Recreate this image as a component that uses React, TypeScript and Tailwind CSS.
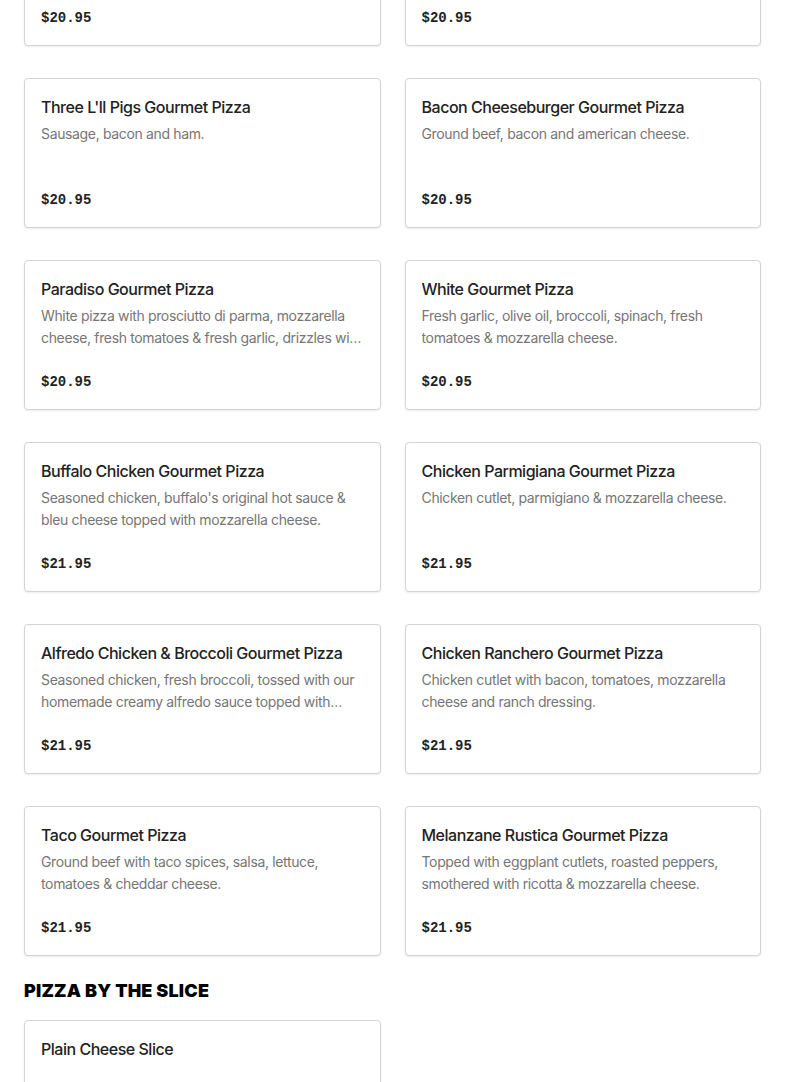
const gourmet = [
  { name: "Supreme Gourmet Pizza", desc: "Sausage, pepperoni, peppers, onions and mushrooms.", price: "$20.95" },
  { name: "Meat Lovers Gourmet Pizza", desc: "Sausage, pepperoni, meatballs and bacon.", price: "$20.95" },
  { name: "Three L'll Pigs Gourmet Pizza", desc: "Sausage, bacon and ham.", price: "$20.95" },
  { name: "Bacon Cheeseburger Gourmet Pizza", desc: "Ground beef, bacon and american cheese.", price: "$20.95" },
  {
    name: "Paradiso Gourmet Pizza",
    desc: "White pizza with prosciutto di parma, mozzarella cheese, fresh tomatoes & fresh garlic, drizzles with balsamic glaze.",
    price: "$20.95"
  },
  { name: "White Gourmet Pizza", desc: "Fresh garlic, olive oil, broccoli, spinach, fresh tomatoes & mozzarella cheese.", price: "$20.95" },
  {
    name: "Buffalo Chicken Gourmet Pizza",
    desc: "Seasoned chicken, buffalo's original hot sauce & bleu cheese topped with mozzarella cheese.",
    price: "$21.95"
  },
  { name: "Chicken Parmigiana Gourmet Pizza", desc: "Chicken cutlet, parmigiano & mozzarella cheese.", price: "$21.95" },
  {
    name: "Alfredo Chicken & Broccoli Gourmet Pizza",
    desc: "Seasoned chicken, fresh broccoli, tossed with our homemade creamy alfredo sauce topped with mozzarella cheese.",
    price: "$21.95"
  },
  {
    name: "Chicken Ranchero Gourmet Pizza",
    desc: "Chicken cutlet with bacon, tomatoes, mozzarella cheese and ranch dressing.",
    price: "$21.95"
  },
  { name: "Taco Gourmet Pizza", desc: "Ground beef with taco spices, salsa, lettuce, tomatoes & cheddar cheese.", price: "$21.95" },
  {
    name: "Melanzane Rustica Gourmet Pizza",
    desc: "Topped with eggplant cutlets, roasted peppers, smothered with ricotta & mozzarella cheese.",
    price: "$21.95"
  }
];

const slices = [
  { name: "Plain Cheese Slice", desc: "", price: "$3.25" },
  { name: "Sicilian Slice", desc: "", price: "$3.75" }
];

function MenuCard({ name, desc, price }: { name: string; desc: string; price: string }) {
  return (
    <div className="flex h-[150px] flex-col rounded-[4px] border border-[#d4d4d4] bg-white px-4 pt-4 pb-4 shadow-[0_1px_2px_rgba(0,0,0,0.08)]">
      <h3 className="truncate text-[16px] leading-6 font-medium tracking-[-0.03em] text-[#222]">{name}</h3>
      <p className="mt-1 line-clamp-2 h-[44px] text-[14px] leading-[22px] tracking-[-0.025em] text-[#767676]">{desc}</p>
      <p className="mt-[22px] font-['Liberation_Mono',monospace] text-[14px] leading-[22px] font-bold text-[#222]">
        {price}
      </p>
    </div>
  );
}

export default function App() {
  return (
    <div className="min-h-screen overflow-hidden bg-white font-['Inter',sans-serif]">
      <div className="-mt-[104px] px-6">
        <div className="grid grid-cols-2 gap-x-6 gap-y-8">
          {gourmet.map((item) => (
            <MenuCard key={item.name} {...item} />
          ))}
        </div>
        <h2 className="pt-[21px] pb-[15px] text-[18px] leading-7 font-black tracking-[0.01em] text-black uppercase">
          Pizza by the Slice
        </h2>
        <div className="grid grid-cols-2 gap-x-6 gap-y-8">
          <MenuCard {...slices[0]} />
        </div>
      </div>
    </div>
  );
}
